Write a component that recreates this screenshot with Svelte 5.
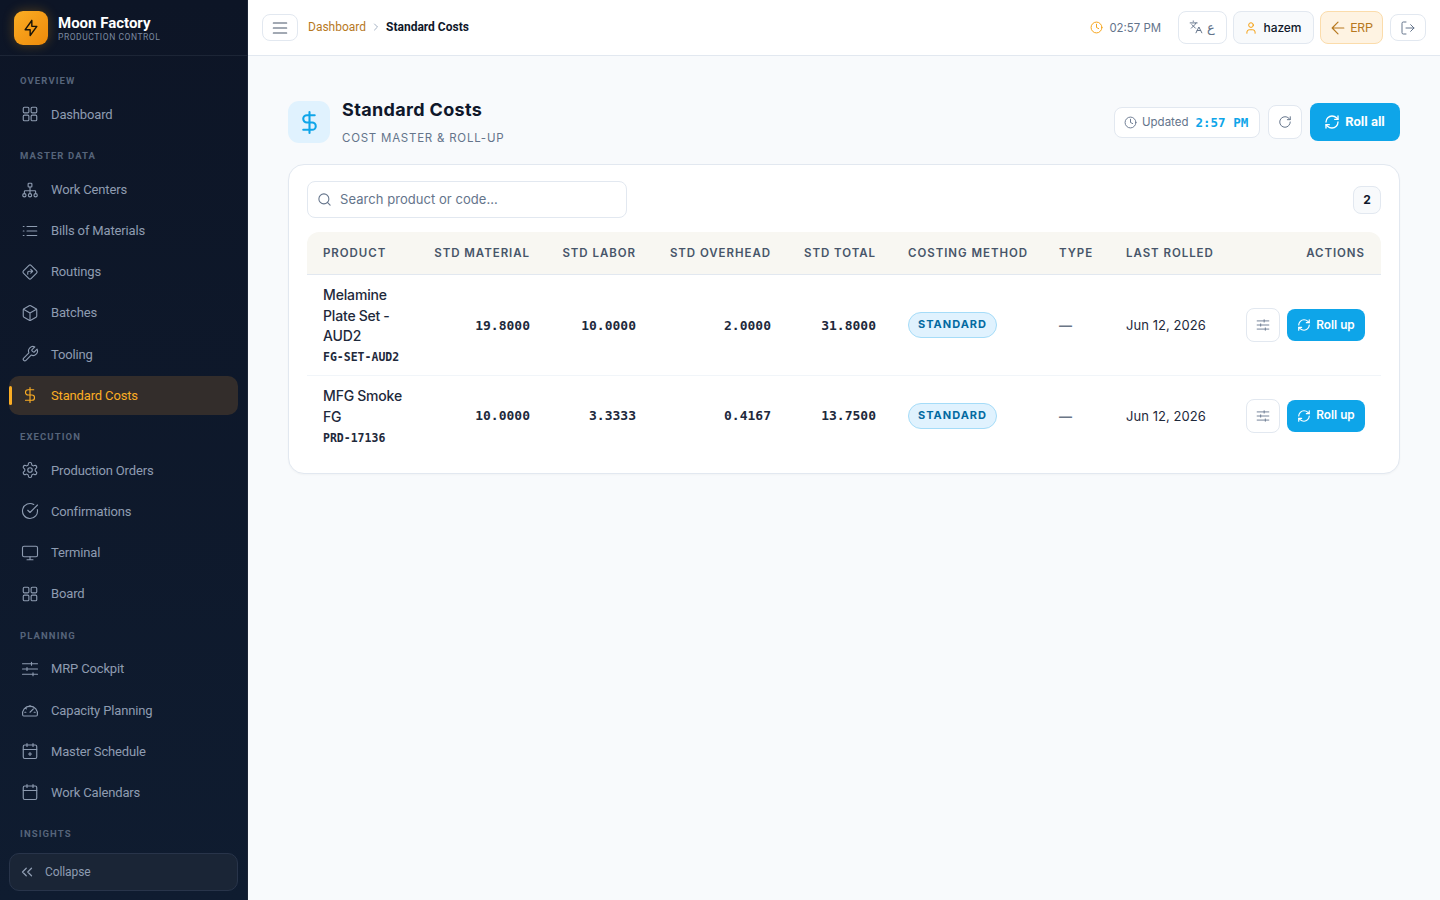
<script>
  const icons = {
    grid: '<rect x="3" y="3" width="7.5" height="7.5" rx="1.5"/><rect x="13.5" y="3" width="7.5" height="7.5" rx="1.5"/><rect x="13.5" y="13.5" width="7.5" height="7.5" rx="1.5"/><rect x="3" y="13.5" width="7.5" height="7.5" rx="1.5"/>',
    network: '<rect x="9.5" y="3" width="5" height="5" rx="1"/><circle cx="4.5" cy="19" r="2.2"/><circle cx="12" cy="19" r="2.2"/><circle cx="19.5" cy="19" r="2.2"/><path d="M12 8v8.8M4.5 16.8V14a1 1 0 0 1 1-1h13a1 1 0 0 1 1 1v2.8"/>',
    list: '<path d="M3 6h1M3 12h1M3 18h1M8 6h13M8 12h13M8 18h13"/>',
    route: '<path d="M10.6 3.2a2 2 0 0 1 2.8 0l7.4 7.4a2 2 0 0 1 0 2.8l-7.4 7.4a2 2 0 0 1-2.8 0l-7.4-7.4a2 2 0 0 1 0-2.8z"/><path d="M9 15v-2.5a1.5 1.5 0 0 1 1.5-1.5H15.5M13 8.500l2.500 2.500-2.500 2.500"/>',
    box: '<path d="M21 8a2 2 0 0 0-1-1.73l-7-4a2 2 0 0 0-2 0l-7 4A2 2 0 0 0 3 8v8a2 2 0 0 0 1 1.73l7 4a2 2 0 0 0 2 0l7-4A2 2 0 0 0 21 16Z"/><path d="m3.3 7 8.7 5 8.700-5M12 22V12"/>',
    wrench: '<path d="M14.7 6.3a1 1 0 0 0 0 1.4l1.6 1.6a1 1 0 0 0 1.4 0l3.77-3.77a6 6 0 0 1-7.94 7.94l-6.91 6.91a2.12 2.12 0 0 1-3-3l6.91-6.91a6 6 0 0 1 7.94-7.94l-3.76 3.76z"/>',
    dollar: '<path d="M12 2v20M17 5H9.500a3.500 3.500 0 0 0 0 7h5a3.500 3.500 0 0 1 0 7H6"/>',
    gear: '<path d="M12.22 2h-.44a2 2 0 0 0-2 2v.18a2 2 0 0 1-1 1.73l-.43.25a2 2 0 0 1-2 0l-.15-.08a2 2 0 0 0-2.73.73l-.22.38a2 2 0 0 0 .73 2.73l.15.1a2 2 0 0 1 1 1.72v.51a2 2 0 0 1-1 1.74l-.15.09a2 2 0 0 0-.73 2.73l.22.38a2 2 0 0 0 2.73.73l.15-.08a2 2 0 0 1 2 0l.43.25a2 2 0 0 1 1 1.73V20a2 2 0 0 0 2 2h.44a2 2 0 0 0 2-2v-.18a2 2 0 0 1 1-1.73l.43-.25a2 2 0 0 1 2 0l.15.08a2 2 0 0 0 2.73-.73l.22-.39a2 2 0 0 0-.73-2.73l-.15-.08a2 2 0 0 1-1-1.74v-.5a2 2 0 0 1 1-1.74l.15-.09a2 2 0 0 0 .73-2.73l-.22-.38a2 2 0 0 0-2.73-.73l-.15.08a2 2 0 0 1-2 0l-.43-.25a2 2 0 0 1-1-1.73V4a2 2 0 0 0-2-2z"/><circle cx="12" cy="12" r="3"/>',
    check: '<path d="M21.801 10A10 10 0 1 1 17 3.335"/><path d="m9 11 3 3L22 4"/>',
    monitor: '<rect x="2" y="3" width="20" height="14" rx="2"/><path d="M8 21h8M12 17v4"/>',
    sliders: '<path d="M2 5h20M2 12h20M2 19h20M14 3v4M8 10v4M16 17v4"/>',
    gauge: '<path d="M4 20a2 2 0 0 1-1.800-1.200A10 10 0 1 1 21.800 18.800 2 2 0 0 1 20 20z"/><path d="m12 15 4.500-4.500M12 6v1.500M6 9.500l1.200 1M5 15h1.500M17.500 15H19"/>',
    calplus: '<path d="M8 2v4M16 2v4"/><rect x="3" y="4" width="18" height="18" rx="2"/><path d="M3 10h18M10 16h4M12 14v4"/>',
    cal: '<path d="M8 2v4M16 2v4"/><rect x="3" y="4" width="18" height="18" rx="2"/><path d="M3 10h18"/>',
    chevrons: '<path d="m11 17-5-5 5-5M18 17l-5-5 5-5"/>',
    bolt: '<path d="M13 3v7h6l-8 11v-7H5l8-11"/>',
    menu: '<path d="M4 6h16M4 12h16M4 18h16"/>',
    chev: '<path d="m9 18 6-6-6-6"/>',
    clock: '<circle cx="12" cy="12" r="10"/><path d="M12 6v6l4 2"/>',
    lang: '<path d="m5 8 6 6M4 14l6-6 2-3M2 5h12M7 2h1M22 22l-5-10-5 10M14 18h6"/>',
    user: '<path d="M19 21v-2a4 4 0 0 0-4-4H9a4 4 0 0 0-4 4v2"/><circle cx="12" cy="7" r="4"/>',
    back: '<path d="m12 19-7-7 7-7M19 12H5"/>',
    logout: '<path d="M9 21H5a2 2 0 0 1-2-2V5a2 2 0 0 1 2-2h4M16 17l5-5-5-5M21 12H9"/>',
    rotate: '<path d="M21 12a9 9 0 1 1-9-9c2.52 0 4.93 1 6.74 2.74L21 8"/><path d="M21 3v5h-5"/>',
    refresh: '<path d="M3 12a9 9 0 0 1 9-9 9.75 9.75 0 0 1 6.74 2.74L21 8"/><path d="M21 3v5h-5"/><path d="M21 12a9 9 0 0 1-9 9 9.75 9.75 0 0 1-6.74-2.74L3 16"/><path d="M8 16H3v5"/>',
    search: '<circle cx="11" cy="11" r="8"/><path d="m21 21-4.34-4.34"/>'
  };

  const nav = [
    { label: 'Overview', items: [['grid', 'Dashboard']] },
    { label: 'Master Data', items: [['network', 'Work Centers'], ['list', 'Bills of Materials'], ['route', 'Routings'], ['box', 'Batches'], ['wrench', 'Tooling'], ['dollar', 'Standard Costs', true]] },
    { label: 'Execution', items: [['gear', 'Production Orders'], ['check', 'Confirmations'], ['monitor', 'Terminal'], ['grid', 'Board']] },
    { label: 'Planning', items: [['sliders', 'MRP Cockpit'], ['gauge', 'Capacity Planning'], ['calplus', 'Master Schedule'], ['cal', 'Work Calendars']] },
    { label: 'Insights', items: [] }
  ];

  const rows = [
    { name: 'Melamine Plate Set - AUD2', code: 'FG-SET-AUD2', mat: '19.8000', lab: '10.0000', ovh: '2.0000', tot: '31.8000' },
    { name: 'MFG Smoke FG', code: 'PRD-17136', mat: '10.0000', lab: '3.3333', ovh: '0.4167', tot: '13.7500' }
  ];
</script>

{#snippet icon(name, size, cls = '')}
  <svg class={cls} width={size} height={size} viewBox="0 0 24 24" fill="none" stroke="currentColor" stroke-linecap="round" stroke-linejoin="round">{@html icons[name]}</svg>
{/snippet}

<div class="app">
  <aside class="sidebar">
    <div class="brand">
      <div class="logo">{@render icon('bolt', 20)}</div>
      <div class="brand-text">
        <div class="brand-name">Moon Factory</div>
        <div class="brand-sub">PRODUCTION CONTROL</div>
      </div>
    </div>
    <nav class="nav">
      {#each nav as section}
        <div class="section">{section.label}</div>
        <div class="items">
          {#each section.items as item}
            <div class="item" class:active={item[2]}>
              {@render icon(item[0], 18)}
              <span>{item[1]}</span>
            </div>
          {/each}
        </div>
      {/each}
    </nav>
    <div class="foot">
      <div class="collapse">{@render icon('chevrons', 18)}<span>Collapse</span></div>
    </div>
  </aside>

  <div class="main">
    <header class="topbar">
      <button class="tb-btn menu">{@render icon('menu', 20)}</button>
      <div class="crumbs">
        <span class="crumb-link">Dashboard</span>
        {@render icon('chev', 12, 'crumb-sep')}
        <span class="crumb-cur">Standard Costs</span>
      </div>
      <div class="tb-right">
        <div class="time">{@render icon('clock', 13, 'amber')}<span>02:57 PM</span></div>
        <button class="tb-btn lang">{@render icon('lang', 14)}<span>ع</span></button>
        <button class="tb-btn user">{@render icon('user', 14, 'amber')}<span>hazem</span></button>
        <button class="tb-btn erp">{@render icon('back', 20)}<span>ERP</span></button>
        <button class="tb-btn out">{@render icon('logout', 16)}</button>
      </div>
    </header>

    <main class="content">
      <div class="page-head">
        <div class="page-icon">{@render icon('dollar', 25)}</div>
        <div class="page-titles">
          <h1>Standard Costs</h1>
          <p>COST MASTER &amp; ROLL-UP</p>
        </div>
        <div class="page-actions">
          <div class="updated">{@render icon('clock', 13)}<span>Updated</span><b>2:57 PM</b></div>
          <button class="refresh">{@render icon('rotate', 14)}</button>
          <button class="primary big">{@render icon('refresh', 16)}<span>Roll all</span></button>
        </div>
      </div>

      <section class="card">
        <div class="toolbar">
          <div class="search">{@render icon('search', 15)}<span>Search product or code...</span></div>
          <div class="count">2</div>
        </div>
        <table>
          <colgroup>
            <col class="c1" /><col class="c2" /><col class="c3" /><col class="c4" /><col class="c5" /><col class="c6" /><col class="c7" /><col class="c8" /><col class="c9" />
          </colgroup>
          <thead>
            <tr>
              <th>PRODUCT</th><th class="r">STD MATERIAL</th><th class="r">STD LABOR</th><th class="r">STD OVERHEAD</th><th class="r">STD TOTAL</th><th>COSTING METHOD</th><th>TYPE</th><th>LAST ROLLED</th><th class="r">ACTIONS</th>
            </tr>
          </thead>
          <tbody>
            {#each rows as row}
              <tr>
                <td class="prod"><div class="pname">{row.name}</div><div class="pcode">{row.code}</div></td>
                <td class="r num">{row.mat}</td>
                <td class="r num">{row.lab}</td>
                <td class="r num">{row.ovh}</td>
                <td class="r num">{row.tot}</td>
                <td><span class="badge">STANDARD</span></td>
                <td class="dash">—</td>
                <td class="date">Jun 12, 2026</td>
                <td class="r">
                  <div class="row-actions">
                    <button class="adj">{@render icon('sliders', 14)}</button>
                    <button class="primary small">{@render icon('refresh', 14)}<span>Roll up</span></button>
                  </div>
                </td>
              </tr>
            {/each}
          </tbody>
        </table>
      </section>
    </main>
  </div>
</div>

<style>
  :global(body) { margin: 0; background: #f8fafc; font-family: Inter, sans-serif; }
  button { font: inherit; cursor: pointer; }
  svg { display: block; flex: none; stroke-width: 1.7; }
  .app { display: flex; height: 100vh; overflow: hidden; }

  .sidebar {
    width: 248px; flex: none; display: flex; flex-direction: column; box-sizing: border-box;
    background: linear-gradient(180deg, #0d1526 0%, #0f1c30 100%);
    border-right: 1px solid #1c2536;
    font-family: Roboto, sans-serif;
  }
  .brand { height: 56px; flex: none; box-sizing: border-box; display: flex; align-items: center; gap: 10px; padding: 0 14px; border-bottom: 1px solid #1c2536; }
  .logo { width: 34px; height: 34px; border-radius: 9px; background: linear-gradient(135deg, #fbad24, #ee8a0a); color: #1a1408; display: flex; align-items: center; justify-content: center; box-shadow: 0 0 12px rgba(245,158,11,.3); }
  .brand-name { color: #fff; font-weight: 700; font-size: 15px; line-height: 17px; padding-top: 1px; }
  .brand-sub { color: #7c8aa0; font-size: 8.5px; letter-spacing: .55px; line-height: 10px; }

  .nav { flex: 1; min-height: 0; overflow: hidden; padding: 2.8px 9px 0 9px; }
  .section { height: 31.5px; box-sizing: border-box; padding: 15.2px 0 0 11px; font-size: 9.5px; line-height: 14px; font-weight: 700; letter-spacing: 1.1px; color: #56647a; text-transform: uppercase; }
  .items { display: flex; flex-direction: column; gap: 2px; padding-top: 4.5px; }
  .item { position: relative; height: 39.15px; display: flex; align-items: center; gap: 12px; padding-left: 12px; border-radius: 10px; color: #8e9cb1; font-size: 13px; letter-spacing: -.15px; }
  .item svg { stroke-width: 1.5; }
  .item.active { background: #332d2b; color: #fbad24; }
  .item.active::before { content: ''; position: absolute; left: 0; top: 10px; bottom: 10px; width: 3px; background: #fbad24; border-radius: 2px; }

  .foot { flex: none; padding: 8px 9px 9px 9px; }
  .collapse { height: 38px; box-sizing: border-box; display: flex; align-items: center; gap: 9px; padding-left: 8px; border: 1px solid #28344a; border-radius: 10px; background: #1a2536; color: #8e9cb1; font-size: 12px; letter-spacing: -.1px; }

  .main { flex: 1; min-width: 0; display: flex; flex-direction: column; }
  .topbar { height: 56px; box-sizing: border-box; flex: none; display: flex; align-items: center; padding: 0 14px; background: #fff; border-bottom: 1px solid #e2e8f0; }
  .tb-btn { display: flex; align-items: center; justify-content: center; box-sizing: border-box; background: #fff; border: 1px solid #e2e8f0; border-radius: 8px; padding: 0; color: #64748b; }
  .menu { width: 36px; height: 27px; color: #475569; }
  .menu svg { stroke-width: 1.4; }
  .crumbs { display: flex; align-items: center; gap: 4px; margin-left: 10px; padding-bottom: 1px; font-family: Roboto, sans-serif; font-size: 12px; }
  .crumb-link { color: #b7791f; }
  .crumb-cur { color: #0f172a; font-weight: 700; }
  .tb-right { margin-left: auto; display: flex; align-items: center; gap: 6px; }
  .time { display: flex; align-items: center; gap: 6px; font-size: 11.4px; color: #64748b; margin-right: 11px; }
  .lang { width: 49px; height: 33px; gap: 4px; justify-content: flex-start; padding-left: 10px; font-family: "DejaVu Sans", sans-serif; font-size: 13px; }
  .lang svg { margin-bottom: 2px; }
  .user { width: 81px; height: 33px; gap: 6px; padding-right: 2px; background: #f8fafc; color: #0f172a; font-size: 12px; font-weight: 500; letter-spacing: -.1px; }
  .erp { width: 63px; height: 33px; gap: 2px; padding-right: 2px; background: #fef3e2; border-color: #fbdcab; color: #b7791f; font-family: Roboto, sans-serif; font-size: 12.5px; }
  .erp svg { stroke-width: 1.4; }
  .out { width: 36px; height: 27px; margin-left: 1px; color: #64748b; }
  .out svg { stroke-width: 1.5; }
  .crumbs :global(.crumb-sep) { color: #94a3b8; }
  .tb-right :global(.amber) { color: #f59e0b; }

  .content { flex: 1; min-height: 0; padding: 32px 40px; box-sizing: border-box; }
  .page-head { display: flex; align-items: center; height: 68px; margin-bottom: 8px; }
  .page-icon { width: 42px; height: 42px; border-radius: 11px; background: #e0f2fe; color: #0ea5e9; display: flex; align-items: center; justify-content: center; margin-right: 12px; }
  .page-icon svg { stroke-width: 2; }
  h1 { margin: 0; font-size: 18px; line-height: 26px; font-weight: 700; letter-spacing: .35px; color: #0f172a; }
  .page-titles { padding-bottom: 2px; }
  .page-titles p { margin: 7px 0 0; font-size: 11.5px; line-height: 16px; letter-spacing: .76px; color: #64748b; }
  .page-actions { margin-left: auto; display: flex; align-items: center; gap: 8px; }
  .updated { height: 31px; width: 146px; box-sizing: border-box; display: flex; align-items: center; gap: 5px; padding-left: 9px; background: #fff; border: 1px solid #e2e8f0; border-radius: 8px; color: #64748b; font-size: 11.5px; }
  .updated b { font-family: "DejaVu Sans Mono", monospace; color: #0ea5e9; font-weight: 700; font-size: 12.5px; margin-left: 2px; }
  .refresh { width: 34px; height: 34px; display: flex; align-items: center; justify-content: center; background: #fff; border: 1px solid #e2e8f0; border-radius: 8px; color: #64748b; padding: 0; }
  .primary { display: flex; align-items: center; justify-content: center; border: 0; background: #0ea5e9; color: #fff; padding: 0; }
  .primary svg { stroke-width: 2; }
  .primary span { padding-bottom: 1px; }
  .primary.big { width: 90px; height: 38px; border-radius: 8px; gap: 5px; font-family: Roboto, sans-serif; font-size: 13px; font-weight: 700; padding-right: 1px; }
  .primary.small { width: 78px; height: 32px; border-radius: 8px; gap: 5px; font-size: 11.8px; font-weight: 600; }

  .card { background: #fff; border: 1px solid #e2e8f0; border-radius: 16px; padding: 16px 18px 17.5px; box-shadow: 0 1px 2px rgba(15,23,42,.03); }
  .toolbar { display: flex; align-items: center; justify-content: space-between; margin-bottom: 14px; }
  .search { width: 320px; height: 37px; box-sizing: border-box; display: flex; align-items: center; gap: 8px; padding-left: 9px; background: #fff; border: 1px solid #e2e8f0; border-radius: 8px; color: #64748b; font-size: 13px; letter-spacing: .05px; }
  .search span { padding-bottom: 1px; }
  .count { width: 28px; height: 28px; box-sizing: border-box; display: flex; align-items: center; justify-content: center; background: #f8fafc; border: 1px solid #e2e8f0; border-radius: 8px; color: #0f172a; font-size: 12px; font-weight: 700; }

  table { width: 1074px; table-layout: fixed; border-collapse: separate; border-spacing: 0; }
  .c1 { width: 111px; } .c2 { width: 128px; } .c3 { width: 106px; } .c4 { width: 135px; } .c5 { width: 105px; } .c6 { width: 151px; } .c7 { width: 67px; } .c8 { width: 120px; } .c9 { width: 151px; }
  th { height: 43px; padding: 0 16px 1px; box-sizing: border-box; background: #f8f7f2; border-bottom: 1px solid #e2e8f0; text-align: left; font-size: 11.5px; font-weight: 600; letter-spacing: .95px; color: #475569; white-space: nowrap; }
  th:first-child { border-top-left-radius: 12px; }
  th:last-child { border-top-right-radius: 12px; }
  th.r, td.r { text-align: right; }
  td { padding: 10px 16px; border-bottom: 1px solid #f1f5f9; font-size: 13px; color: #0f172a; vertical-align: middle; }
  td.prod { padding-right: 10px; }
  tbody tr:last-child td { border-bottom: 0; }
  .pname { font-size: 14px; line-height: 20.5px; font-weight: 500; letter-spacing: -.15px; word-spacing: -.5px; color: #1e293b; }
  .pcode { font-family: "DejaVu Sans Mono", monospace; font-size: 11.5px; font-weight: 700; line-height: 16px; color: #1e293b; margin-top: 2.5px; }
  .num { font-family: "DejaVu Sans Mono", monospace; font-weight: 700; color: #1e293b; }
  .badge { display: inline-block; height: 26px; box-sizing: border-box; padding: 0 9px; line-height: 23px; background: #e0f2fe; border: 1px solid #a5dcf8; border-radius: 13px; color: #0369a1; font-size: 11px; font-weight: 700; letter-spacing: 1px; }
  .dash { color: #6b7686; font-weight: 700; }
  .date { font-size: 13px; letter-spacing: .05px; color: #1e293b; }
  .row-actions { display: flex; justify-content: flex-end; align-items: center; gap: 7px; }
  .adj { width: 34px; height: 34px; display: flex; align-items: center; justify-content: center; background: #fff; border: 1px solid #e2e8f0; border-radius: 8px; color: #64748b; padding: 0; }
  .adj svg { stroke-width: 1.5; }
</style>
